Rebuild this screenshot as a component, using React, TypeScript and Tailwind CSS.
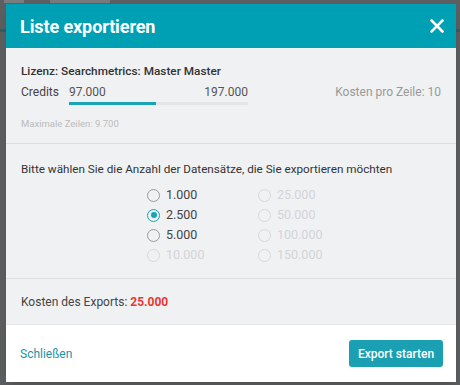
import React from "react";

const Radio = ({ label, checked, disabled }: { label: string; checked?: boolean; disabled?: boolean }) => (
  <div className="flex items-center h-[20px] gap-[6px]">
    <span
      className={
        "w-[13px] h-[13px] rounded-full border-[1.5px] flex items-center justify-center " +
        (checked ? "border-[#1aa3b5]" : disabled ? "border-[#d6d8db]" : "border-[#9a9a9a]")
      }
    >
      {checked && <span className="w-[6px] h-[6px] rounded-full bg-[#1aa3b5]" />}
    </span>
    <span className={"text-[12.5px] " + (disabled ? "text-[#d2d4d7]" : "text-[#444]")}>{label}</span>
  </div>
);

export default function App() {
  return (
    <div
      className="w-[460px] h-[385px] bg-[#5d5e5f] relative overflow-hidden"
      style={{ fontFamily: "Roboto, 'Liberation Sans', sans-serif" }}
    >
      <div className="absolute left-[4px] top-[0px] w-[20px] h-[3px] bg-[#7a7c7e]" />
      <div className="absolute left-[50px] top-[0px] w-[60px] h-[3px] bg-[#77797b]" />
      <div className="absolute left-[0px] top-[29px] w-[460px] h-[3px] bg-[#2f5f66]" />
      <div className="absolute left-[6px] top-[4px] w-[450px] h-[378px] flex flex-col shadow-lg">
        <div className="h-[44px] bg-[#00a0b4] flex items-center justify-between pl-[14px] pr-[12px]">
          <span className="text-white text-[18px] font-bold tracking-[-0.1px]">Liste exportieren</span>
          <svg width="14" height="14" viewBox="0 0 14 14">
            <path d="M1.5 1.5 L12.5 12.5 M12.5 1.5 L1.5 12.5" stroke="white" strokeWidth="2.6" strokeLinecap="square" />
          </svg>
        </div>
        <div className="bg-[#f0f1f3] h-[96px] border-b border-[#dcdee0] px-[15px] pt-[15px]">
          <div className="text-[11.8px] font-medium text-[#333] leading-[16px]">Lizenz: Searchmetrics: Master Master</div>
          <div className="flex items-start mt-[5px] justify-between">
            <div className="flex items-start gap-[10px]">
              <span className="text-[12px] text-[#444] leading-[16px]">Credits</span>
              <div className="w-[179px] flex flex-col">
                <div className="flex justify-between text-[12px] text-[#555] leading-[16px]">
                  <span>97.000</span>
                  <span>197.000</span>
                </div>
                <div className="h-[3px] bg-[#e4e5e7] mt-[2px] flex">
                  <div className="h-full w-[87px] bg-[#1aa3b5]" />
                </div>
              </div>
            </div>
            <span className="text-[12px] text-[#999] leading-[16px]">Kosten pro Zeile: 10</span>
          </div>
          <div className="text-[9.5px] text-[#bbb] mt-[12px]">Maximale Zeilen: 9.700</div>
        </div>
        <div className="bg-[#f0f1f3] h-[135px] border-b border-[#dcdee0] px-[15px] pt-[17px]">
          <div className="text-[11.7px] text-[#333] leading-[16px]">
            Bitte wählen Sie die Anzahl der Datensätze, die Sie exportieren möchten
          </div>
          <div className="flex mt-[8px] pl-[126px] gap-[53px]">
            <div className="flex flex-col w-[58px]">
              <Radio label="1.000" />
              <Radio label="2.500" checked />
              <Radio label="5.000" />
              <Radio label="10.000" disabled />
            </div>
            <div className="flex flex-col">
              <Radio label="25.000" disabled />
              <Radio label="50.000" disabled />
              <Radio label="100.000" disabled />
              <Radio label="150.000" disabled />
            </div>
          </div>
        </div>
        <div className="bg-[#f0f1f3] h-[46px] border-b border-[#e6e7e9] px-[15px] flex items-center">
          <span className="text-[12px] text-[#444]">
            Kosten des Exports: <span className="font-bold text-[#e53935]">25.000</span>
          </span>
        </div>
        <div className="bg-white flex-1 flex items-center justify-between pl-[14px] pr-[13px]">
          <span className="text-[12px] text-[#1a93a8]">Schließen</span>
          <button className="h-[27px] w-[94px] bg-[#1aa0b2] rounded-[3px] text-white text-[12px] font-medium">
            Export starten
          </button>
        </div>
      </div>
    </div>
  );
}
